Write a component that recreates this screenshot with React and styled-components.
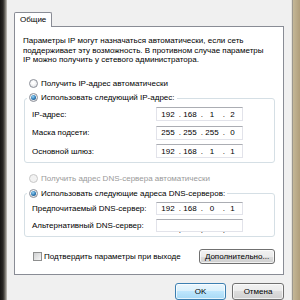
import React from 'react';
import styled, { createGlobalStyle } from 'styled-components';

const Global = createGlobalStyle`
  html, body { margin: 0; padding: 0; width: 300px; height: 300px; overflow: hidden; background: #f0f0f0; }
  body { font-family: "Liberation Sans", Arial, sans-serif; font-size: 8px; color: #000; }
  * { box-sizing: border-box; }
`;

const Screen = styled.div`
  width: 300px; height: 300px; display: flex; overflow: hidden;
`;
const LeftFrame = styled.div`
  width: 7px; flex: none;
  background: linear-gradient(to right, #151412 0, #2a2825 3px, #6d6a63 5px, #c9c6c0 7px);
`;
const RightFrame = styled.div`
  width: 9px; flex: none;
  background: linear-gradient(to right, #e4e2dc 0, #e4e2dc 1px, #9c988f 1px, #9c988f 2px, #c4b797 2px, #b09e7b 100%);
`;
const Dialog = styled.div`
  flex: 1; display: flex; flex-direction: column; padding: 12px 7px 0 7px; background: #f0f0f0;
`;
const TabStrip = styled.div`
  display: flex; position: relative; z-index: 1; margin-bottom: -1px;
`;
const Tab = styled.div`
  background: #fff; border: 1px solid #898c95; border-bottom: none;
  height: 15px; line-height: 14px; padding: 0 5px; border-radius: 2px 2px 0 0;
`;
const Panel = styled.div`
  background: #fff; border: 1px solid #898c95; height: 252px;
  padding: 9px 8px 0 9px; display: flex; flex-direction: column;
`;
const Desc = styled.p`
  margin: 0 0 0 -1px; line-height: 9.5px;
`;
const RadioRow = styled.label`
  display: flex; align-items: center; gap: 3px; height: 12px;
  padding-left: 5px; margin-top: ${p => p.$mt || 0}px;
  color: ${p => (p.$disabled ? '#9a9a9a' : '#000')};
`;
const Radio = styled.span`
  width: 9px; height: 9px; border-radius: 50%; flex: none;
  border: 1px solid ${p => (p.$disabled ? '#c8c8c8' : '#8c9099')};
  background: ${p => (p.$disabled ? '#f2f2f2' : 'radial-gradient(circle at 45% 40%, #ffffff 20%, #d6d8dc 100%)')};
  display: flex; align-items: center; justify-content: center;
  &::after {
    content: ''; width: 5px; height: 5px; border-radius: 50%;
    background: radial-gradient(circle at 40% 35%, #9bd6f6 0%, #2b78b4 55%, #173f66 100%);
    display: ${p => (p.$checked ? 'block' : 'none')};
  }
`;
const Group = styled.div`
  border: 1px solid #d5dfe5; border-radius: 3px;
  margin-top: ${p => p.$mt}px; padding: 0 0 4px 7px;
  display: flex; flex-direction: column; gap: ${p => p.$gap}px;
`;
const Legend = styled.div`
  display: flex; align-items: center; gap: 3px; height: 12px;
  margin: -7px 0 ${p => p.$mb}px -5px; padding: 0 2px; background: #fff; align-self: flex-start;
`;
const FieldRow = styled.div`
  display: grid; grid-template-columns: 124px 87px; align-items: center; height: ${p => p.$h}px;
`;
const IpBox = styled.div`
  height: 100%; border: 1px solid #e2e3ea; border-top-color: #abadb3; background: #fff;
  display: grid; grid-template-columns: 22px 22px 22px 19px; align-items: center;
`;
const Octet = styled.span`
  position: relative; text-align: center;
  &::after {
    content: ${p => (p.$dot ? '"."' : 'none')};
    position: absolute; right: -2px; top: 0;
  }
`;
const BottomRow = styled.div`
  display: flex; align-items: center; justify-content: space-between; margin-top: 12px; height: 15px;
`;
const CheckLabel = styled.label`
  display: flex; align-items: center; gap: 2px; padding-left: 9px;
`;
const CheckBox = styled.span`
  width: 9px; height: 9px; flex: none; border: 1px solid #8e8f8f;
  background: linear-gradient(135deg, #cfd0d1, #f6f6f6);
`;
const Button = styled.button`
  font: inherit; color: #000; padding: 0; margin: 0;
  width: ${p => p.$w}px; height: ${p => p.$h}px; border-radius: 3px;
  border: 1px solid ${p => (p.$primary ? '#3c7fb1' : '#707070')};
  background: ${p => (p.$primary
    ? 'linear-gradient(#eaf6fd 0%, #d9f0fc 50%, #bee6fd 50%, #a7d9f5 100%)'
    : 'linear-gradient(#f2f2f2 0%, #ebebeb 50%, #dddddd 50%, #cfcfcf 100%)')};
  box-shadow: inset 0 0 0 1px rgba(255,255,255,0.7);
`;
const ButtonBar = styled.div`
  display: flex; justify-content: flex-end; gap: 6px; margin-top: 8px; padding-right: 0;
`;

const Ip = ({ value }) => {
  const parts = value ? value.split('.') : ['', '', '', ''];
  return (
    <IpBox>
      {parts.map((p, i) => <Octet key={i} $dot={i < 3}>{p}</Octet>)}
    </IpBox>
  );
};

export default function App() {
  return (
    <>
      <Global />
      <Screen>
        <LeftFrame />
        <Dialog>
          <TabStrip><Tab>Общие</Tab></TabStrip>
          <Panel>
            <Desc>
              Параметры IP могут назначаться автоматически, если сеть<br />
              поддерживает эту возможность. В противном случае параметры<br />
              IP можно получить у сетевого администратора.
            </Desc>
            <RadioRow $mt={13}><Radio />Получить IP-адрес автоматически</RadioRow>
            <Group $mt={8} $gap={4.5}>
              <Legend $mb={-1}><Radio $checked />Использовать следующий IP-адрес:</Legend>
              <FieldRow $h={14}><span>IP-адрес:</span><Ip value="192.168.1.2" /></FieldRow>
              <FieldRow $h={14}><span>Маска подсети:</span><Ip value="255.255.255.0" /></FieldRow>
              <FieldRow $h={14}><span>Основной шлюз:</span><Ip value="192.168.1.1" /></FieldRow>
            </Group>
            <RadioRow $mt={9} $disabled><Radio $disabled />Получить адрес DNS-сервера автоматически</RadioRow>
            <Group $mt={9} $gap={4}>
              <Legend $mb={-1}><Radio $checked />Использовать следующие адреса DNS-серверов:</Legend>
              <FieldRow $h={13}><span>Предпочитаемый DNS-сервер:</span><Ip value="192.168.0.1" /></FieldRow>
              <FieldRow $h={13}><span>Альтернативный DNS-сервер:</span><Ip /></FieldRow>
            </Group>
            <BottomRow>
              <CheckLabel><CheckBox />Подтвердить параметры при выходе</CheckLabel>
              <Button $w={76} $h={15}>Дополнительно...</Button>
            </BottomRow>
          </Panel>
          <ButtonBar>
            <Button $primary $w={51} $h={17}>OK</Button>
            <Button $w={52} $h={17}>Отмена</Button>
          </ButtonBar>
        </Dialog>
        <RightFrame />
      </Screen>
    </>
  );
}
